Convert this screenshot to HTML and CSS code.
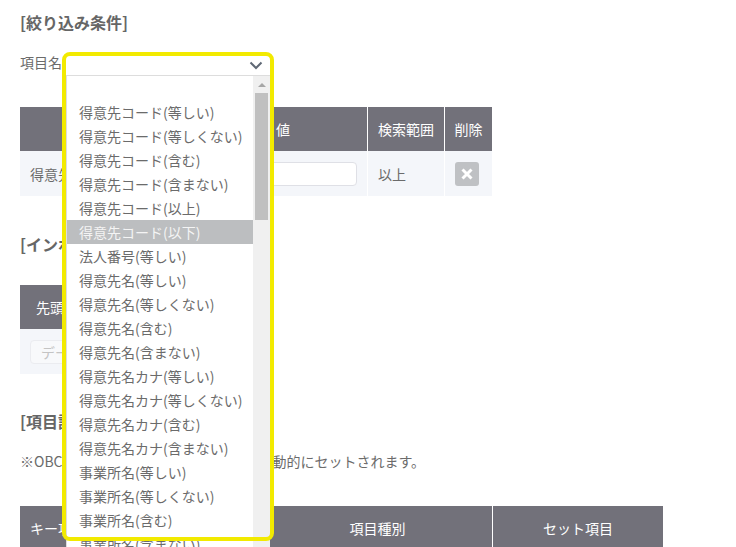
FILE: index.html
```html
<!DOCTYPE html>
<html lang="ja">
<head>
    <meta charset="UTF-8">
    <title>項目設定</title>
    <link rel="stylesheet" href="styles.css">
</head>
<body>
    <div class="title title-first">[絞り込み条件]</div>

    <div class="filter-row">項目名</div>

    <table class="data-table table-filter">
        <colgroup>
            <col class="col-item">
            <col class="col-value">
            <col class="col-range">
            <col class="col-delete">
        </colgroup>
        <tr>
            <th>項目名</th>
            <th>値</th>
            <th>検索範囲</th>
            <th>削除</th>
        </tr>
        <tr>
            <td>得意先コード(以上)</td>
            <td><input type="text" class="input-field"></td>
            <td>以上</td>
            <td>
                <button class="delete-button">
                    <svg width="14" height="14" viewBox="0 0 14 14"><path d="M2.5 2.5l9 9M11.500 2.500l-9 9" stroke="#fff" stroke-width="3" fill="none"/></svg>
                </button>
            </td>
        </tr>
    </table>

    <div class="title title-import">[インポート設定]</div>

    <table class="data-table table-import">
        <tr>
            <th>先頭データ行</th>
        </tr>
        <tr>
            <td><input type="text" class="input-field input-import" placeholder="データ"></td>
        </tr>
    </table>

    <div class="title title-items">[項目設定]</div>
    <div class="note">※OBC奉行の項目は、項目名などから自動的にセットされます。</div>

    <table class="data-table table-items">
        <colgroup>
            <col class="col-key">
            <col class="col-name">
            <col class="col-type">
            <col class="col-set">
        </colgroup>
        <tr>
            <th>キー項目</th>
            <th>項目名</th>
            <th>項目種別</th>
            <th>セット項目</th>
        </tr>
    </table>

    <!-- 開いた状態のセレクトボックス -->
    <div class="select-box">
        <div class="select-field">
            <svg width="14" height="9" viewBox="0 0 14 9"><path d="M1.500 1.500L7 7l5.500-5.500" stroke="#5f6875" stroke-width="2" fill="none"/></svg>
        </div>
        <div class="select-drop">
            <ul class="option-list">
                <li class="option"></li>
                <li class="option">得意先コード(等しい)</li>
                <li class="option">得意先コード(等しくない)</li>
                <li class="option">得意先コード(含む)</li>
                <li class="option">得意先コード(含まない)</li>
                <li class="option">得意先コード(以上)</li>
                <li class="option selected">得意先コード(以下)</li>
                <li class="option">法人番号(等しい)</li>
                <li class="option">得意先名(等しい)</li>
                <li class="option">得意先名(等しくない)</li>
                <li class="option">得意先名(含む)</li>
                <li class="option">得意先名(含まない)</li>
                <li class="option">得意先名カナ(等しい)</li>
                <li class="option">得意先名カナ(等しくない)</li>
                <li class="option">得意先名カナ(含む)</li>
                <li class="option">得意先名カナ(含まない)</li>
                <li class="option">事業所名(等しい)</li>
                <li class="option">事業所名(等しくない)</li>
                <li class="option">事業所名(含む)</li>
                <li class="option">事業所名(含まない)</li>
            </ul>
            <div class="scrollbar">
                <div class="scroll-arrow"></div>
                <div class="scroll-thumb"></div>
            </div>
        </div>
    </div>

    <!-- 黄色の注釈枠 -->
    <div class="highlight-frame"></div>
</body>
</html>
```

FILE: styles.css
```css
html, body {
    height: 547px;
    overflow: hidden;
}

body {
    margin: 0;
    padding: 0 20px;
    position: relative;
    background-color: #fff;
    color: #6b6b6b;
    font-family: "Noto Sans CJK JP", "Noto Sans", sans-serif;
    font-size: 14px;
}

.title {
    font-size: 16px;
    font-weight: bold;
    line-height: 24px;
    color: #666;
}

.title-first {
    margin-top: 10px;
}

.title-import {
    margin-top: 36px;
}

.title-items {
    margin-top: 35px;
}

.filter-row {
    margin-top: 18px;
    line-height: 20px;
}

.note {
    margin-top: 18px;
    line-height: 20px;
}

.data-table {
    border-collapse: separate;
    border-spacing: 0;
    table-layout: fixed;
}

.data-table th {
    height: 44px;
    padding: 0;
    background-color: #72717a;
    color: #fff;
    font-weight: normal;
    text-align: center;
}

.data-table td {
    height: 45px;
    padding: 0 10px;
    background-color: #f4f6fa;
    box-sizing: border-box;
}

.data-table th + th,
.data-table td + td {
    border-left: 1px solid #fff;
}

.table-filter {
    width: 472px;
    margin-top: 35px;
}

.col-item { width: 178px; }
.col-value { width: 169px; }
.col-range { width: 77px; }
.col-delete { width: 48px; }

.table-import {
    width: 200px;
    margin-top: 29px;
}

.table-import th {
    padding-right: 84px;
}

.table-items {
    width: 643px;
    margin-top: 35px;
}

.col-key { width: 76px; }
.col-name { width: 166px; }
.col-type { width: 230px; }
.col-set { width: 171px; }

.input-field {
    display: block;
    width: 100%;
    height: 24px;
    box-sizing: border-box;
    border: 1px solid #dfe0e6;
    border-radius: 4px;
    background-color: #fff;
}

.input-import {
    padding: 0 10px;
    border-color: #ebecf0;
    background-color: #f8f9fb;
    font-family: inherit;
    font-size: 14px;
}

.input-import::placeholder {
    color: #c4c4c4;
}

.delete-button {
    display: flex;
    align-items: center;
    justify-content: center;
    width: 24px;
    height: 24px;
    padding: 0;
    border: none;
    border-radius: 3px;
    background-color: #bfc1c4;
}

.select-box {
    position: absolute;
    top: 56px;
    left: 66px;
    width: 204px;
    background-color: #fff;
}

.select-field {
    display: flex;
    align-items: center;
    justify-content: flex-end;
    height: 19px;
    padding-right: 7px;
    border-bottom: 1px solid #ddd;
}

.select-drop {
    display: flex;
    height: 500px;
    border-left: 1px solid #ddd;
}

.option-list {
    flex: 1;
    margin: 0;
    padding: 0;
    list-style: none;
}

.option {
    height: 24px;
    padding-left: 12px;
    line-height: 24px;
    white-space: nowrap;
}

.option.selected {
    background-color: #bcbec0;
    color: #f4f4f4;
}

.scrollbar {
    width: 17px;
    background-color: #f0f0f0;
}

.scroll-arrow {
    width: 0;
    height: 0;
    margin: 7px auto 6px;
    border-left: 4px solid transparent;
    border-right: 4px solid transparent;
    border-bottom: 4px solid #a6a6a6;
}

.scroll-thumb {
    width: 13px;
    height: 127px;
    margin: 0 auto;
    background-color: #c0c0c0;
}

.highlight-frame {
    position: absolute;
    top: 52px;
    left: 62px;
    width: 212px;
    height: 489px;
    box-sizing: border-box;
    border: 4px solid #f2ea00;
    border-radius: 8px;
}
```
